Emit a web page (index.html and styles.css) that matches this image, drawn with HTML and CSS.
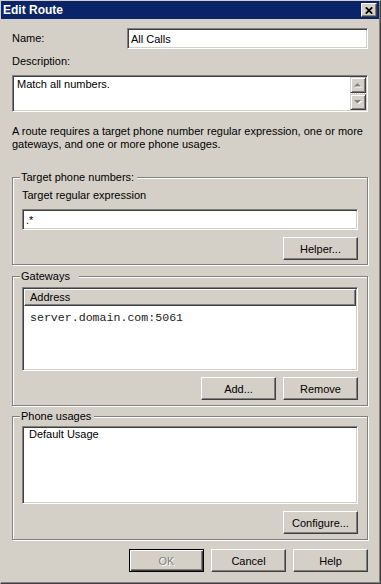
FILE: index.html
```html
<!DOCTYPE html>
<html lang="en">
<head>
    <meta charset="UTF-8">
    <meta name="viewport" content="width=device-width, initial-scale=1.0">
    <title>Edit Route</title>
    <link rel="stylesheet" href="styles.css">
</head>
<body>
    <div class="window">
        <div class="titlebar">
            <span class="title">Edit Route</span>
            <span class="close-btn">
                <svg width="8" height="7" viewBox="0 0 8 7"><path d="M0.8 0.3 L7.2 6.7 M7.2 0.3 L0.8 6.7" stroke="#000" stroke-width="1.7" fill="none"/></svg>
            </span>
        </div>
        <div class="content">
            <div class="name-row">
                <label class="name-label">Name:</label>
                <input type="text" class="field name-field" value="All Calls">
            </div>
            <div class="label desc-label">Description:</div>
            <div class="memo">
                <div class="memo-text">Match all numbers.</div>
                <div class="scrollbar">
                    <span class="sb-btn">
                        <svg width="8" height="5" viewBox="0 0 8 5"><path d="M4.5 1 L8 4.5 L1 4.5 Z" fill="#fff"/><path d="M3.5 0 L7 3.5 L0 3.5 Z" fill="#808080"/></svg>
                    </span>
                    <span class="sb-track"></span>
                    <span class="sb-btn">
                        <svg width="8" height="5" viewBox="0 0 8 5"><path d="M1 1 L8 1 L4.5 4.5 Z" fill="#fff"/><path d="M0 0 L7 0 L3.5 3.5 Z" fill="#808080"/></svg>
                    </span>
                </div>
            </div>
            <p class="info">A route requires a target phone number regular expression, one or more<br>gateways, and one or more phone usages.</p>

            <div class="group group-target">
                <div class="legend">Target phone numbers:</div>
                <div class="label">Target regular expression</div>
                <input type="text" class="field regex-field" value=".*">
                <div class="btn-row">
                    <button class="btn">Helper...</button>
                </div>
            </div>

            <div class="group group-gateways">
                <div class="legend legend-wide">Gateways</div>
                <div class="listview">
                    <div class="lv-header">Address</div>
                    <div class="lv-item mono">server.domain.com:5061</div>
                </div>
                <div class="btn-row">
                    <button class="btn">Add...</button>
                    <button class="btn">Remove</button>
                </div>
            </div>

            <div class="group group-usages">
                <div class="legend">Phone usages</div>
                <div class="listbox">
                    <div class="lb-item">Default Usage</div>
                </div>
                <div class="btn-row">
                    <button class="btn">Configure...</button>
                </div>
            </div>

            <div class="btn-row dialog-buttons">
                <button class="btn default" disabled>OK</button>
                <button class="btn">Cancel</button>
                <button class="btn">Help</button>
            </div>
        </div>
    </div>
</body>
</html>
```

FILE: styles.css
```css
body {
    margin: 0;
    background: #d4d0c8;
    font-family: "Liberation Sans", Arial, sans-serif;
    font-size: 11px;
    line-height: 13px;
    color: #000;
}
.window {
    width: 381px;
    height: 584px;
    box-sizing: border-box;
    border: 1px solid;
    border-color: #d4d0c8 #404040 #404040 #d4d0c8;
    box-shadow: inset -1px -1px #808080;
    overflow: hidden;
}
.titlebar {
    display: flex;
    align-items: flex-start;
    justify-content: space-between;
    height: 18px;
    margin-right: 1px;
    background: #0a246a;
    color: white;
}
.title {
    font-weight: bold;
    font-size: 12px;
    padding-left: 2px;
    line-height: 18px;
}
.close-btn {
    display: flex;
    align-items: center;
    justify-content: center;
    box-sizing: border-box;
    width: 16px;
    height: 14px;
    margin: 2px 2px 0 0;
    background: #d4d0c8;
    border: 1px solid;
    border-color: #fff #404040 #404040 #fff;
    box-shadow: inset -1px -1px #808080;
}
.content {
    padding: 9px 12px 0 11px;
}
.name-row {
    display: flex;
    align-items: center;
    height: 21px;
}
.name-label {
    width: 115px;
    flex: none;
}
.field {
    box-sizing: border-box;
    height: 21px;
    margin: 0;
    padding: 0 3px;
    border: 1px solid;
    border-color: #808080 #fff #fff #808080;
    box-shadow: inset 1px 1px #404040, inset -1px -1px #d4d0c8;
    background: #fff;
    font-family: inherit;
    font-size: 11px;
    color: #000;
    outline: none;
}
.name-field {
    width: 241px;
}
.desc-label {
    margin-top: 6px;
}
.memo {
    display: flex;
    box-sizing: border-box;
    height: 37px;
    margin-top: 7px;
    border: 1px solid;
    border-color: #808080 #fff #fff #808080;
    box-shadow: inset 1px 1px #404040, inset -1px -1px #d4d0c8;
    background: #fff;
    padding: 1px;
}
.memo-text {
    flex: 1;
    padding: 1px 3px 0;
}
.scrollbar {
    display: flex;
    flex-direction: column;
    width: 16px;
}
.sb-btn {
    display: flex;
    align-items: center;
    justify-content: center;
    box-sizing: border-box;
    height: 16px;
    background: #d4d0c8;
    border: 1px solid;
    border-color: #d4d0c8 #404040 #404040 #d4d0c8;
    box-shadow: inset 1px 1px #fff, inset -1px -1px #808080;
}
.sb-track {
    flex: 1;
    background: repeating-conic-gradient(#fff 0 25%, #d4d0c8 0 50%) 0 0 / 2px 2px;
}
.info {
    margin: 13px 0 0;
}
.group {
    border: 1px solid #808080;
    box-shadow: inset 1px 1px #fff, 1px 1px #fff;
    padding: 0 9px 4px 9px;
}
.group-target {
    margin-top: 26px;
}
.group-gateways {
    margin-top: 11px;
    padding-bottom: 5px;
}
.group-usages {
    margin-top: 10px;
    padding-bottom: 5px;
}
.legend {
    width: fit-content;
    margin: -7px 0 0 -2px;
    padding: 0 3px 0 1px;
    background: #d4d0c8;
}
.legend-wide {
    padding-right: 9px;
}
.group-target .label {
    margin-top: 5px;
}
.regex-field {
    width: 100%;
    margin-top: 7px;
}
.btn-row {
    display: flex;
    justify-content: flex-end;
    gap: 7px;
    margin-top: 7px;
}
.btn {
    box-sizing: border-box;
    width: 75px;
    height: 23px;
    margin: 0;
    padding: 0;
    background: #d4d0c8;
    border: 1px solid;
    border-color: #fff #404040 #404040 #fff;
    box-shadow: inset -1px -1px #808080;
    font-family: inherit;
    font-size: 11px;
    color: #000;
}
.btn.default {
    border-color: #000;
    box-shadow: inset 1px 1px #fff, inset -1px -1px #404040, inset -2px -2px #808080;
}
.btn:disabled {
    color: #808080;
    text-shadow: 1px 1px #fff;
}
.listview, .listbox {
    box-sizing: border-box;
    border: 1px solid;
    border-color: #808080 #fff #fff #808080;
    box-shadow: inset 1px 1px #404040, inset -1px -1px #d4d0c8;
    background: #fff;
    padding: 1px;
}
.listview {
    height: 84px;
    margin-top: 4px;
}
.lv-header {
    box-sizing: border-box;
    height: 17px;
    padding-left: 5px;
    line-height: 15px;
    background: #d4d0c8;
    border: 1px solid;
    border-color: #fff #404040 #404040 #fff;
    box-shadow: inset -1px -1px #808080;
}
.lv-item {
    padding: 5px 0 0 6px;
}
.mono {
    font-family: "Liberation Mono", "Courier New", monospace;
    font-size: 11.6px;
    color: #222;
}
.listbox {
    height: 78px;
    margin-top: 3px;
}
.lb-item {
    padding-left: 5px;
}
.group-gateways .btn-row {
    margin-top: 6px;
}
.dialog-buttons {
    margin-top: 9px;
}
```
